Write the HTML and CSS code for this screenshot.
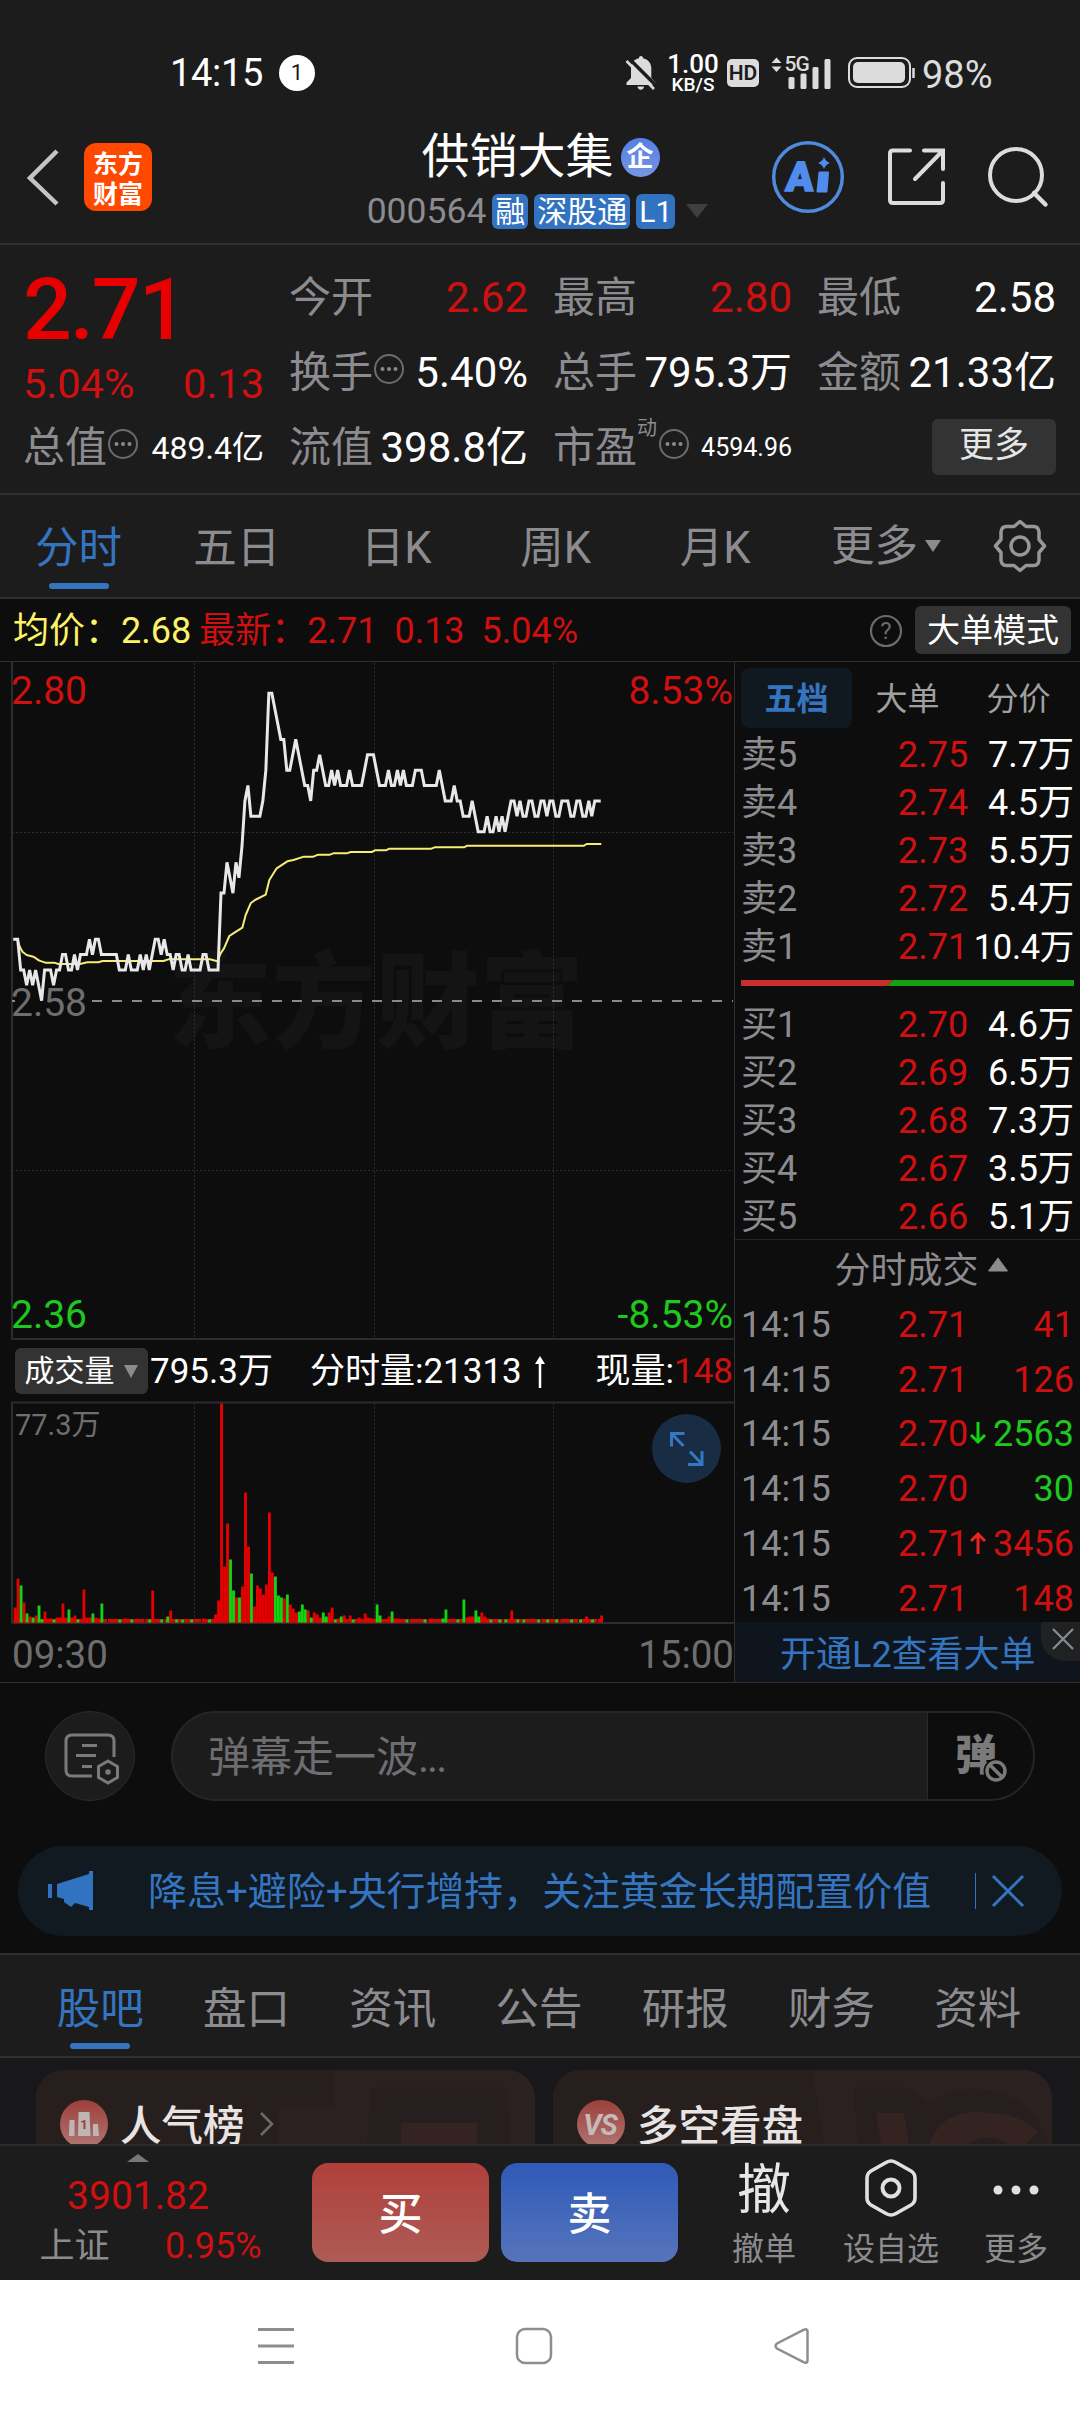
FILE: index.html
```html
<!DOCTYPE html>
<html lang="zh-CN">
<head>
<meta charset="utf-8">
<title>供销大集 000564</title>
<link rel="stylesheet" href="styles.css">
</head>
<body>
<div class="status">
  <span class="clock">14:15</span><span class="notice">1</span>
  <svg class="bell" width="32" height="36" viewBox="0 0 32 36"><path fill="#dcdcdc" d="M16 1c1.500 0 2 1 2 2.200 5 1 8.300 4.800 8.300 10V23l4.200 4.500V30H1.500v-2.500L6 23V13c0-5 3-9 8-9.800C14 2 14.500 1 16 1zM12.500 31.500h6.500c0 2-1.500 3.200-3.200 3.200s-3.300-1.200-3.300-3.200z"/><path stroke="#1c1c1c" stroke-width="3.500" d="M3.500 3l28 28"/><path stroke="#dcdcdc" stroke-width="2.600" d="M1.500 6l27.500 28"/></svg>
  <span class="speed"><b>1.00</b><i>KB/S</i></span>
  <span class="hd">HD</span>
  <svg class="signal" width="62" height="34" viewBox="0 0 62 34"><g fill="#dcdcdc"><path d="M6.500 1.500l5 5.500H1.500zM6.500 16l5-5.500H1.500z"/><rect x="18.500" y="21" width="6" height="12" rx="1.500"/><rect x="30.500" y="17.500" width="6" height="15.500" rx="1.500"/><rect x="42.500" y="11" width="6" height="22" rx="1.500"/><rect x="54.500" y="3" width="6" height="30" rx="1.500"/></g><text x="14.500" y="15" class="net">5G</text></svg>
  <svg class="battery" width="68" height="32" viewBox="0 0 68 32"><rect x="1" y="1" width="61" height="29" rx="8" fill="none" stroke="#dcdcdc" stroke-width="2"/><rect x="5" y="5" width="52" height="21" rx="5" fill="#dcdcdc"/><path d="M65.500 11v10" stroke="#dcdcdc" stroke-width="2.500"/></svg>
  <span class="pct">98%</span>
</div>

<header class="head">
  <svg class="back" width="36" height="60" viewBox="0 0 36 60"><path d="M32 4L5 31l27 26" fill="none" stroke="#c4c4c4" stroke-width="4.500"/></svg>
  <div class="logo"><span>东方</span><span>财富</span></div>
  <div class="title">
    <div class="name">供销大集<span class="qi">企</span></div>
    <div class="code">000564<span class="tag">融</span><span class="tag">深股通</span><span class="tag">L1</span><svg width="24" height="14" viewBox="0 0 24 14"><path d="M1 0h22L12 14z" fill="#3f3f3f"/></svg></div>
  </div>
  <svg class="ai" width="74" height="74" viewBox="0 0 74 74"><circle cx="37" cy="37" r="34.300" fill="none" stroke="#5089dd" stroke-width="3.500"/><text x="14" y="51" class="ai-a">A</text><path d="M48.500 32.500h8.500l-1.500 19h-9z" fill="#508cee" stroke="#508cee" stroke-width="2" stroke-linejoin="round"/><path d="M53 17q1.500 4.500 6 6-4.500 1.500-6 6-1.500-4.500-6-6 4.500-1.500 6-6z" fill="#508cee"/></svg>
  <svg class="share" width="60" height="60" viewBox="0 0 60 60"><path d="M23 3.500H6q-3 0-3 3V53q0 3 3 3h47q3 0 3-3V36M37 3.500h19V22M55 4.500L28 32" fill="none" stroke="#dcdcdc" stroke-width="4" stroke-linecap="round"/></svg>
  <svg class="search" width="62" height="62" viewBox="0 0 62 62"><circle cx="29" cy="29" r="26" fill="none" stroke="#dcdcdc" stroke-width="4"/><path d="M47 47l11.500 11.500" stroke="#dcdcdc" stroke-width="4.500" stroke-linecap="round"/></svg>
</header>

<section class="quote">
  <div class="last">
    <div class="price">2.71</div>
    <div class="chg"><span>5.04%</span><span>0.13</span></div>
    <div class="cell mid"><label>总值<svg class="dots"><use href="#more"/></svg></label><b>489.4亿</b></div>
  </div>
  <div class="col">
    <div class="cell"><label>今开</label><b class="up">2.62</b></div>
    <div class="cell"><label>换手<svg class="dots"><use href="#more"/></svg></label><b>5.40%</b></div>
    <div class="cell"><label>流值</label><b>398.8亿</b></div>
  </div>
  <div class="col">
    <div class="cell"><label>最高</label><b class="up">2.80</b></div>
    <div class="cell"><label>总手</label><b>795.3万</b></div>
    <div class="cell small"><label>市盈<sup>动</sup><svg class="dots"><use href="#more"/></svg></label><b>4594.96</b></div>
  </div>
  <div class="col">
    <div class="cell"><label>最低</label><b>2.58</b></div>
    <div class="cell"><label>金额</label><b>21.33亿</b></div>
    <div class="cell end"><span class="more">更多</span></div>
  </div>
</section>
<svg class="defs" width="0" height="0"><symbol id="more" viewBox="0 0 32 32"><circle cx="16" cy="16" r="14" fill="none" stroke="#6c6c6f" stroke-width="2"/><g fill="#8a8a8d"><circle cx="9.500" cy="16" r="2"/><circle cx="16" cy="16" r="2"/><circle cx="22.500" cy="16" r="2"/></g></symbol></svg>

<nav class="periods">
  <span class="on">分时</span><span>五日</span><span>日K</span><span>周K</span><span>月K</span>
  <span class="drop">更多<svg width="16" height="12" viewBox="0 0 16 12"><path d="M0 0h16L8 12z" fill="#8c8c90"/></svg></span>
  <svg class="gear" width="54" height="54" viewBox="0 0 54 54" fill="none" stroke="#97979b" stroke-width="3.500" stroke-linejoin="round"><path d="M27 2.500l6 5h8q4 0 5 5v8l5.500 6.500-5.500 6.500v8q-1 5-5 5h-8l-6 5-6-5h-8q-4 0-5-5v-8L2.500 27 8 20.500v-8q1-5 5-5h8z"/><circle cx="27" cy="27" r="9"/></svg>
</nav>

<div class="avg">
  <span class="yellow">均价：2.68</span><span class="up">最新：2.71</span><span class="up">0.13</span><span class="up">5.04%</span>
  <svg class="help" width="34" height="34" viewBox="0 0 34 34"><circle cx="17" cy="17" r="15" fill="none" stroke="#6b6b6b" stroke-width="2.200"/><text x="17" y="25" text-anchor="middle">?</text></svg>
  <span class="mode">大单模式</span>
</div>

<main class="board">
  <div class="charts">
    <svg class="price-chart" width="734" height="678" viewBox="0 662 734 678">
      <g class="mark"><text x="168" y="1040" textLength="416">东方财富</text></g>
      <path class="frame" d="M12 662v677H734"/>
      <path class="grid" d="M194.500 663v675M374.500 663v675M553.500 663v675M12 832.500H733M12 1170.500H733"/>
      <path d="M12 1001H15M92 1001H733" stroke="#8a8a8a" stroke-width="2" stroke-dasharray="10 10"/>
      <g class="axis">
        <text x="11" y="704" fill="#d01010">2.80</text><text x="733" y="704" text-anchor="end" fill="#d01010">8.53%</text>
        <text x="11" y="1016" fill="#6e6e6e">2.58</text>
        <text x="11" y="1328" fill="#1ec81e">2.36</text><text x="733" y="1328" text-anchor="end" fill="#1ec81e">-8.53%</text>
      </g>
      <polyline class="avg-line" transform="translate(0 660) scale(.33333)" points="52,838 60,862 68,876 80,885 100,890 118,902 136,908 163,908 175,912 240,912 262,907 295,907 308,903 490,903 505,898 630,898 652,904 662,880 672,865 688,828 700,820 727,803 737,765 752,730 765,720 797,704 808,660 830,625 862,604 880,600 912,590 940,590 955,584 990,584 1000,580 1040,580 1052,576 1115,576 1125,571 1158,571 1168,566 1294,566 1304,562 1392,562 1402,557 1752,557 1760,552 1804,552"/>
      <polyline class="price-line" transform="translate(11.700 1000.700) scale(2.990 -15.370)" points="0.5,4 2,4 3,2 4,2 5,1 6,2 7,1 8,2 9,1 10,0 11,2 13,2 14,1 15,2 16,2 17,3 18,3 19,2 20,2 21,3 22,2 23,3 25,3 26,4 27,3 28,4 29,4 30,3 35,3 36,2 38,2 39,3 40,2 42,2 43,3 44,2 45,3 46,2 48,4 49,4 50,3 51,4 52,3 53,3 54,2 55,3 56,3 57,2 58,2 59,3 60,2 63,2 64,3 65,3 66,2 69,2 70,7 71,7 72,9 74,7 75,9 76,8 77,10 78,13 79,14 80,12 83,12 84,13 85,15 86,20 87,20 89,18 90,17 91,17 92,15 93,15 95,17 96,16 98,14 99,14 100,13 101,15 102,15 103,16 104,15 105,14 106,14 107,15 108,14 109,15 110,14 112,14 113,15 114,14 117,14 118,15 119,16 121,16 122,15 123,14 125,14 126,15 127,14 128,14 129,15 130,14 131,15 132,14 134,14 135,15 137,15 138,14 142,14 143,15 144,14 145,13 147,13 148,14 149,13 150,13 151,12 153,12 154,13 155,12 156,11 158,11 159,12 160,11 161,11 162,12 163,11 164,12 165,11 166,12 167,13 168,13 169,12 170,13 171,12 172,12 173,13 174,13 175,12 176,12 177,13 178,13 179,12 180,13 181,13 182,12 183,12 184,13 186,13 187,12 188,12 189,13 190,13 191,12 192,12 193,13 194,12 195,13 197,13"/>
    </svg>
    <div class="volume-head">
      <span class="pill">成交量<svg width="16" height="13" viewBox="0 0 16 13"><path d="M1 0h14L8 13z" fill="#8c8c90"/></svg></span><span>795.3万</span><span class="minute">分时量:21313</span><svg class="arrow" width="12" height="32" viewBox="0 0 12 32"><path d="M6 4v28" stroke="#fff" stroke-width="2.500"/><path d="M6 0l5 8H1z" fill="#fff"/></svg><span class="now">现量:<em>148</em></span>
    </div>
    <svg class="volume-chart" width="734" height="222" viewBox="0 1402 734 222">
      <path class="frame" d="M12 1623V1402.500H734M12 1623H734"/>
      <path class="grid" d="M194.500 1403v219M374.500 1403v219M553.500 1403v219"/>
      <g fill="none" transform="translate(15.100 1622.500) scale(2.992 -1)">
        <path stroke="#d40808" stroke-width="3.500" stroke-dasharray="6 .3" d="M-.5 1.750H196.500"/>
        <path stroke="#e60000" stroke-width=".95" d="M0 0v15M1 0v44M3 0v20M5 0v6M7 0v7M10 0v11M11 0v4M12 0v4M14 0v5M15 0v5M16 0v19M17 0v5M19 0v5M20 0v7M23 0v33M24 0v5M25 0v5M27 0v5M28 0v4M37 0v4M46 0v32M52 0v12M63 0v4M67 0v8M68 0v22M69 0v219M70 0v56M71 0v99M74 0v25M76 0v36M77 0v130M78 0v76M80 0v16M81 0v37M82 0v34M83 0v28M84 0v38M85 0v110M86 0v50M90 0v24M92 0v18M93 0v14M94 0v10M98 0v12M100 0v10M101 0v8M102 0v5M105 0v10M106 0v15M108 0v4M110 0v7M112 0v7M115 0v5M117 0v9M118 0v5M119 0v4M120 0v4M125 0v6M127 0v4M128 0v4M139 0v4M151 0v5M152 0v6M153 0v6M156 0v10M157 0v6M158 0v4M166 0v12M191 0v6M196 0v7"/>
        <path stroke="#12d412" stroke-width=".95" d="M2 0v37M4 0v9M6 0v5M8 0v17M9 0v3M13 0v3M18 0v13M21 0v3M26 0v9M29 0v19M35 0v3M39 0v3M45 0v3M49 0v3M51 0v6M54 0v3M56 0v3M59 0v3M65 0v3M72 0v63M73 0v32M75 0v25M79 0v49M87 0v46M88 0v27M89 0v25M91 0v28M95 0v11M96 0v18M97 0v13M99 0v5M103 0v10M104 0v6M107 0v3M109 0v6M113 0v3M121 0v18M122 0v7M126 0v11M131 0v3M137 0v3M143 0v4M144 0v13M148 0v3M150 0v23M154 0v12M155 0v6M159 0v3M162 0v3M164 0v3M168 0v3M170 0v3M175 0v3M178 0v3M181 0v3M186 0v3M189 0v3M193 0v3"/>
      </g>
      <text x="15" y="1435" class="peak">77.3万</text>
      <circle cx="686.500" cy="1448.500" r="34.500" fill="#182c44"/>
      <path d="M671.500 1446.500v-13h13M672 1434l11.500 12M690 1451.500l11.500 12M702 1451v13.500h-14" fill="none" stroke="#3478c2" stroke-width="3"/>
    </svg>
    <div class="times"><span>09:30</span><span>15:00</span></div>
  </div>

  <aside class="book">
    <div class="modes"><span class="on">五档</span><span>大单</span><span>分价</span></div>
    <div class="levels">
      <div><label>卖5</label><b>2.75</b><i>7.7万</i></div>
      <div><label>卖4</label><b>2.74</b><i>4.5万</i></div>
      <div><label>卖3</label><b>2.73</b><i>5.5万</i></div>
      <div><label>卖2</label><b>2.72</b><i>5.4万</i></div>
      <div><label>卖1</label><b>2.71</b><i class="long">10.4万</i></div>
    </div>
    <svg class="ratio" width="333" height="6" viewBox="0 0 333 6"><path d="M0 0h152l-6 6H0z" fill="#c92d2d"/><path d="M152 0h181v6H146z" fill="#15a015"/></svg>
    <div class="levels">
      <div><label>买1</label><b>2.70</b><i>4.6万</i></div>
      <div><label>买2</label><b>2.69</b><i>6.5万</i></div>
      <div><label>买3</label><b>2.68</b><i>7.3万</i></div>
      <div><label>买4</label><b>2.67</b><i>3.5万</i></div>
      <div><label>买5</label><b>2.66</b><i>5.1万</i></div>
    </div>
    <div class="ticks-title">分时成交<svg width="22" height="15" viewBox="0 0 22 15"><path d="M11 1l9.500 13h-19z" fill="#8c8c90" stroke="#8c8c90" stroke-linejoin="round"/></svg></div>
    <div class="ticks">
      <div><label>14:15</label><b>2.71</b><i>41</i></div>
      <div><label>14:15</label><b>2.71</b><i>126</i></div>
      <div class="down"><label>14:15</label><b>2.70</b><svg width="16" height="24" viewBox="0 0 16 24"><path d="M8 1v20M1 14l7 7 7-7"/></svg><i>2563</i></div>
      <div class="down"><label>14:15</label><b>2.70</b><i>30</i></div>
      <div><label>14:15</label><b>2.71</b><svg width="16" height="24" viewBox="0 0 16 24"><path d="M8 23V3M1 10l7-7 7 7"/></svg><i>3456</i></div>
      <div><label>14:15</label><b>2.71</b><i>148</i></div>
    </div>
    <div class="l2">开通L2查看大单<span class="x"><svg width="22" height="22" viewBox="0 0 22 22"><path d="M1 1l20 20M21 1L1 21" stroke="#8a8d90" stroke-width="2.200"/></svg></span></div>
  </aside>
</main>

<section class="danmu">
  <div class="round"><svg width="56" height="54" viewBox="0 0 56 54" fill="none" stroke="#7a7a7a" stroke-width="3"><path d="M29 44H9q-6 0-6-6V9q0-6 6-6h36q6 0 6 6v16M19 13.500h15M13 23.500h20M19 34.500h10"/><path d="M45 29l9.500 5.500v11L45 51l-9.500-5.500v-11z"/><circle cx="45" cy="40" r="2" fill="#7a7a7a" stroke-width="1.500"/></svg></div>
  <div class="input"><span>弹幕走一波<i>...</i></span><div class="switch"><b>弹</b><svg width="26" height="26" viewBox="0 0 26 26"><circle cx="13" cy="13" r="9" fill="#0d0d0d" stroke="#0d0d0d" stroke-width="7"/><circle cx="13" cy="13" r="9" fill="none" stroke="#7a7a7a" stroke-width="3.500"/><path d="M7 7l12 12" stroke="#7a7a7a" stroke-width="3.500"/></svg></div></div>
</section>

<div class="promo-wrap">
  <div class="promo">
    <svg class="horn" width="46" height="40" viewBox="0 0 46 40"><path d="M0 13h4v14H0zM9 13L41 3V0h4v39h-4v-3l-14-4-4 4-7-5v-3l-7-2z" fill="#3173c0"/></svg>
    <span>降息+避险+央行增持，关注黄金长期配置价值</span>
    <i></i>
    <svg class="close" width="34" height="34" viewBox="0 0 34 34"><path d="M2 2l30 30M32 2L2 32" stroke="#3575c0" stroke-width="3"/></svg>
  </div>
</div>

<nav class="tabs"><span class="on">股吧</span><span>盘口</span><span>资讯</span><span>公告</span><span>研报</span><span>财务</span><span>资料</span></nav>

<section class="cards">
  <div class="card">
    <svg class="art" width="499" height="74" viewBox="0 0 499 74"><path d="M0 0h298v38h-55v36H0z" fill="#271f1e"/><path d="M335 17h136l4 57H331z" fill="#271e1f"/><path d="M365 53h76v21h-76z" fill="#352321"/></svg>
    <svg width="48" height="48" viewBox="0 0 48 48"><defs><linearGradient id="g" x2="0" y2="1"><stop stop-color="#9c403b"/><stop offset="1" stop-color="#b07672"/></linearGradient></defs><circle cx="24" cy="24" r="24" fill="url(#g)"/><path d="M9.500 20h5v16H9zM18.500 12h11l1 24H18zM33 24h5l1 12h-6z" fill="#beb5b4"/><text x="24" y="29" class="rank">1</text></svg>
    <b>人气榜</b>
    <svg class="chev" width="16" height="26" viewBox="0 0 16 26"><path d="M2 2l11 11L2 24" fill="none" stroke="#6e6a69" stroke-width="2.500"/></svg>
  </div>
  <div class="card">
    <svg class="art" width="499" height="74" viewBox="0 0 499 74"><path d="M0 0h259l12 74H0z" fill="#271f1e"/><path d="M300 17h55l20 15q34-22 78-7 28 11 44 49H305z" fill="#271e1f"/><path d="M323 43h28l5 31h-28zM376 74q12-32 48-32 42 0 61 20l-12 12h-19q-20-13-38 0z" fill="#352321"/></svg>
    <svg width="48" height="48" viewBox="0 0 48 48"><circle cx="24" cy="24" r="24" fill="url(#g)"/><text x="23" y="35" class="vs">VS</text></svg>
    <b>多空看盘</b>
  </div>
</section>

<footer class="bar">
  <div class="index"><svg width="22" height="8" viewBox="0 0 22 8"><path d="M0 8h22L11 0z" fill="#77777a"/></svg><strong>3901.82</strong><div><label>上证</label><b>0.95%</b></div></div>
  <div class="btn buy">买</div>
  <div class="btn sell">卖</div>
  <div class="act cancel"><div class="big">撤</div><span>撤单</span></div>
  <div class="act star"><div class="big"><svg width="54" height="58" viewBox="0 0 54 58" fill="none" stroke="#e0e0e0"><path d="M22 3.500q5-3 10 0l15 8.500q4 2.500 4 7v20q0 4.500-4 7l-15 8.500q-5 3-10 0L7 46q-4-2.500-4-7V19q0-4.500 4-7z" stroke-width="3.600"/><circle cx="27" cy="29" r="8.500" stroke-width="4"/></svg></div><span>设自选</span></div>
  <div class="act last-act"><div class="big"><svg width="46" height="10" viewBox="0 0 46 10" fill="#e0e0e0"><circle cx="5" cy="5" r="4.500"/><circle cx="23" cy="5" r="4.500"/><circle cx="41" cy="5" r="4.500"/></svg></div><span>更多</span></div>
</footer>

<div class="system">
  <svg width="38" height="38" viewBox="0 0 38 38"><path d="M1 2.500h36M1 19h36M1 35.500h36" stroke="#8e8e8e" stroke-width="3"/></svg>
  <svg width="38" height="38" viewBox="0 0 38 38"><rect x="2" y="2" width="34" height="34" rx="8" fill="none" stroke="#8e8e8e" stroke-width="2.500"/></svg>
  <svg width="38" height="38" viewBox="0 0 38 38"><path d="M30.500 2.800L4 16.500q-3 2.500 0 5l26.500 13.700q4 1.500 4-1.700V4.500q0-3.200-4-1.700z" fill="none" stroke="#8e8e8e" stroke-width="2.500"/></svg>
</div>
</body>
</html>
```
FILE: styles.css
```css
* { box-sizing: border-box; }
body { margin: 0; width: 1080px; height: 2412px; overflow: hidden; background: #1c1c1c; color: #fff; font-family: Roboto, "Noto Sans CJK SC", sans-serif; font-size: 36px; line-height: 1.2; white-space: nowrap; }
b, i, em, strong { font-weight: 400; font-style: normal; }
svg { display: block; flex: none; overflow: visible; }
.defs { position: absolute; }
.up { color: #d01010; }

.status { height: 110px; padding: 36px 0 0 170px; display: flex; align-items: center; }
.clock { width: 109px; font-size: 38px; letter-spacing: -.3px; padding-top: 2px; }
.notice { width: 36px; height: 36px; border-radius: 50%; background: #fff; color: #1c1c1c; font-size: 22px; line-height: 36px; text-align: center; }
.bell { margin-left: 310px; }
.speed { width: 52px; margin-left: 10px; display: flex; flex-direction: column; align-items: center; }
.speed b { font-size: 26px; line-height: 22px; font-weight: 500; }
.speed i { font-size: 19px; line-height: 19px; font-weight: 500; }
.hd { width: 32px; height: 28px; margin-left: 8px; border-radius: 5px; background: #dcdcdc; color: #1c1c1c; font-size: 21px; line-height: 28px; font-weight: 600; text-align: center; }
.signal { margin-left: 11px; }
.net { font-size: 21px; font-weight: 500; fill: #dcdcdc; letter-spacing: -1px; }
.battery { margin-left: 16px; }
.pct { margin-left: 6px; font-size: 38px; color: #dcdcdc; padding-top: 5px; }

.head { height: 135px; border-bottom: 2px solid #303030; display: flex; }
.back { margin: 37px 0 0 25px; }
.logo { width: 68px; height: 68px; margin: 33px 0 0 23px; border-radius: 12px; background: #ff4800; display: flex; flex-direction: column; justify-content: center; align-items: center; font: 700 25px/30px "Noto Sans CJK SC", sans-serif; }
.title { width: 380px; margin: 17px 0 0 196px; display: flex; flex-direction: column; align-items: center; }
.name { display: flex; align-items: center; gap: 7px; font-size: 48px; line-height: 60px; margin-left: 5px; }
.qi { width: 39px; height: 39px; border-radius: 50%; background: linear-gradient(#557fe4, #7596e6); font-size: 27px; line-height: 38px; font-weight: 700; text-align: center; }
.code { display: flex; align-items: center; gap: 6px; height: 36px; margin-top: 6px; color: #8c8c90; font-size: 35.500px; }
.tag { height: 35px; padding: 0 3px; border-radius: 6px; background: #3173c0; color: #fff; font-size: 30px; line-height: 36px; }
.code svg { margin-left: 4px; }
.ai { margin: 30px 0 0 43px; }
.ai-a { font: 900 41px Roboto, sans-serif; fill: #508cee; stroke: #508cee; stroke-width: 1.500px; transform: skewX(-4deg); transform-origin: 20px 50px; }
.share { margin: 37px 0 0 42px; }
.search { margin: 36px 0 0 40px; }

.quote { height: 250px; border-bottom: 2px solid #303030; padding: 0 24px 0 23px; display: grid; grid-template-columns: 241px 239px 239px 239px; column-gap: 25px; font-size: 42px; }
.last { color: #d01010; }
.price { height: 103px; padding-top: 15px; color: #e80000; font-size: 86px; line-height: 100px; font-weight: 500; letter-spacing: -2px; }
.chg { height: 61px; display: flex; justify-content: space-between; align-items: center; font-size: 41.500px; padding-top: 11px; }
.cell { height: 75px; display: flex; align-items: center; justify-content: space-between; padding-top: 3px; }
.col { padding-top: 14px; }
.cell label { display: flex; align-items: center; color: #8c8c90; }
.cell b { color: #fff; }
.cell b.up { color: #d01010; }
.dots { width: 32px; height: 32px; margin-bottom: 8px; }
.last .cell b { font-size: 32px; }
.small b { font-size: 25px; }
.cell sup { width: 21px; font-size: 20px; margin: -40px 0 0 0; line-height: 20px; }
.end { justify-content: flex-end; }
.more { width: 124px; height: 56px; margin-top: -3px; border-radius: 6px; background: #333; color: #e6e6e6; font-size: 35px; line-height: 54px; text-align: center; }

.periods { height: 104px; border-bottom: 2px solid #303030; display: flex; align-items: center; color: #8c8c90; font-size: 43.500px; }
.periods span { width: 159.500px; height: 102px; line-height: 107px; text-align: center; }
.periods .on { width: 157px; position: relative; color: #3575c0; }
.on::after { content: ""; position: absolute; left: 50%; bottom: 8px; width: 60px; height: 6px; margin-left: -30px; border-radius: 3px; background: #3575c0; }
.periods .drop { width: 160px; display: flex; align-items: center; justify-content: center; gap: 7px; margin-left: 11px; }
.gear { margin-left: 27px; }

.avg { height: 63px; background: #0d0d0d; border-bottom: 1px solid #303030; padding: 3px 9px 0 13px; display: flex; align-items: center; gap: 17px; }
.yellow { color: #fdf268; margin-right: -9px; }
.help { margin-left: auto; margin-right: -5px; margin-top: -2px; }
.help text { font-size: 24px; fill: #6b6b6b; }
.mode { width: 156px; height: 48px; margin-top: -3px; border-radius: 6px; background: #333; font-size: 33px; line-height: 50px; text-align: center; }

.board { height: 1021px; background: #0d0d0d; border-bottom: 1px solid #303030; display: flex; }
.charts { width: 734px; }
.frame { fill: none; stroke: #2c2c2c; stroke-width: 2; }
.grid { fill: none; stroke: #2e2e2e; stroke-width: 1; stroke-dasharray: 2 2; }
.mark text { font: 900 104px "Noto Sans CJK SC", sans-serif; fill: #141414; }
.avg-line { fill: none; stroke: #f7ec76; stroke-width: 6; stroke-linejoin: round; }
.price-line { fill: none; stroke: #e8e8e8; stroke-width: 3; vector-effect: non-scaling-stroke; }
.axis { font-size: 39px; }
.peak { font-size: 29px; fill: #6e6e6e; }
.volume-head { height: 62px; display: flex; align-items: center; font-size: 35px; padding: 2px 0 0 15px; }
.pill { width: 133px; height: 46px; margin: -2px 2px 0 0; border-radius: 6px; background: #333; display: flex; align-items: center; justify-content: center; gap: 8px; font-size: 30px; }
.minute { margin-left: 37px; }
.arrow { margin-left: 12px; }
.now { margin-left: auto; margin-right: 1px; }
.now em { color: #d01010; }
.times { height: 58px; display: flex; justify-content: space-between; align-items: center; padding: 4px 0 0 12px; color: #6e6e6e; font-size: 38.500px; }

.book { width: 346px; border-left: 1px solid #303030; }
.modes { display: flex; height: 68px; padding: 6px 0 0 6px; font-size: 32px; color: #a0a0a2; text-align: center; line-height: 63px; }
.modes span { width: 111px; height: 60px; }
.modes .on { border-radius: 8px; background: #101820; color: #3575c0; font-weight: 700; }
.modes .on::after { display: none; }
.levels { padding: 0 7px 0 6px; }
.levels div, .ticks div { height: 48.050px; padding-top: 3px; display: grid; grid-template-columns: 157px 70px 106px; align-items: center; color: #fff; }
.levels label, .ticks label { color: #8c8c90; }
.levels b, .ticks b { color: #d01010; }
.levels i, .ticks i { text-align: right; grid-column: 3; grid-row: 1; }
.levels .long { font-size: 34.500px; letter-spacing: -.3px; }
.ratio { margin: 10px 0 14px 6px; }
.ticks-title { height: 62px; border-top: 1px solid #252525; margin-top: -1px; display: flex; justify-content: center; gap: 8px; padding: 10px 0 0 28px; color: #8c8c90; font-size: 36px; line-height: 43px; }
.ticks-title svg { margin-top: 7px; }
.ticks { height: 326px; padding: 0 7px 0 6px; margin-top: -5px; }
.ticks div { height: 54.800px; }
.ticks svg { grid-column: 3; grid-row: 1; margin-left: 2px; margin-top: -3px; fill: none; stroke: #f02424; stroke-width: 3; }
.ticks i { color: #d01010; }
.ticks .down i { color: #1ec81e; }
.ticks .down svg { stroke: #12d412; }
.l2 { position: relative; height: 59.300px; background: #0f151d; color: #3575c0; font-size: 36px; line-height: 66px; padding-left: 45px; }
.x { position: absolute; right: 0; top: 0; width: 39px; height: 39px; background: #1f2123; border-bottom-left-radius: 24px; padding: 6px 0 0 11px; }

.danmu { height: 163px; background: #0d0d0d; padding: 28px 45px 0; display: flex; gap: 36px; }
.round { width: 90px; height: 90px; border: 1px solid #2b2b2b; border-radius: 50%; background: #1c1c1c; padding: 20px 0 0 17px; }
.input { width: 864px; height: 90px; border: 2px solid #262626; border-radius: 45px; background: #1c1c1c; overflow: hidden; display: flex; justify-content: space-between; align-items: center; padding-left: 35px; color: #6e6e72; font-size: 42px; }
.input span { padding-top: 4px; }
.input i { letter-spacing: -2px; }
.switch { width: 106px; height: 86px; border-left: 1px solid #2b2b2b; background: #0d0d0d; position: relative; color: #7a7a7a; font-size: 42px; padding: 18px 0 0 27px; }
.switch b { font-weight: 900; }
.switch svg { position: absolute; left: 55px; top: 45px; }

.promo-wrap { background: #0d0d0d; padding: 0 18px 17px; }
.promo { height: 90px; border-radius: 45px; background: #111921; color: #3575c0; display: flex; align-items: center; font-size: 38.900px; padding-left: 30px; }
.promo span { width: 783px; margin-left: 54px; padding-top: 2px; }
.promo i { width: 1px; height: 36px; background: #3575c0; margin-left: 44px; }
.promo .close { margin-left: 15px; }

.tabs { position: relative; height: 105px; border-top: 2px solid #303030; border-bottom: 2px solid #303030; background: #1c1c1c; padding: 0 29px 0 27px; display: flex; color: #8c8c90; font-size: 43.500px; line-height: 109px; text-align: center; }
.tabs span { flex: 1; position: relative; }
.tabs .on { color: #3575c0; }
.tabs .on::after { bottom: 7px; }

.cards { height: 86px; background: #18181a; padding: 12px 28px 0 36px; display: flex; justify-content: space-between; overflow: hidden; }
.card { position: relative; width: 499px; height: 130px; border-radius: 28px; background: #2b2120; overflow: hidden; padding: 30px 0 0 24px; display: flex; align-items: flex-start; font-size: 41.500px; line-height: 54px; color: #e8e4e4; }
.card > * { position: relative; }
.card .art { position: absolute; left: 0; top: 0; }
.card b { margin-left: 12px; font-weight: 500; }
.chev { margin: 11px 0 0 14px; }
.rank { font-size: 13px; font-weight: 700; fill: #9c403b; text-anchor: middle; }
.vs { font: italic 700 29px Roboto, sans-serif; fill: #c4bab9; text-anchor: middle; letter-spacing: -1px; }

.bar { height: 136px; border-top: 2px solid #2a2a2a; background: #1c1c1c; display: flex; }
.index { width: 276px; display: flex; flex-direction: column; align-items: center; padding-top: 8px; color: #d01010; margin-right: 36px; }
.index strong { font-size: 39px; line-height: 50px; margin-top: 9px; }
.index div { width: 222px; display: flex; justify-content: space-between; align-items: center; margin: 4px 0 0 25px; }
.index label { color: #8c8c90; font-size: 35px; }
.index b { font-size: 36px; }
.btn { width: 177px; height: 99px; margin: 17px 12px 0 0; border-radius: 16px; font-size: 44px; font-weight: 500; line-height: 105px; text-align: center; }
.buy { background: linear-gradient(#b0403b, #ae5b56); }
.sell { background: linear-gradient(#2f5ab8, #5674bb); }
.act { width: 94px; margin-left: 27px; text-align: center; color: #8c8c90; font-size: 32px; }
.act .big { height: 78px; display: flex; justify-content: center; align-items: center; color: #e6e6e6; font-size: 54px; padding-top: 6px; }
.cancel .big { padding-top: 12px; }
.act span { display: block; line-height: 48px; margin-top: 1px; }
.star { width: 100px; margin-left: 30px; }
.last-act { margin-left: 28px; }
.last-act .big { padding-top: 9px; }

.system { height: 132px; background: #fff; padding: 47px 269px 0 257px; display: flex; justify-content: space-between; }
```
